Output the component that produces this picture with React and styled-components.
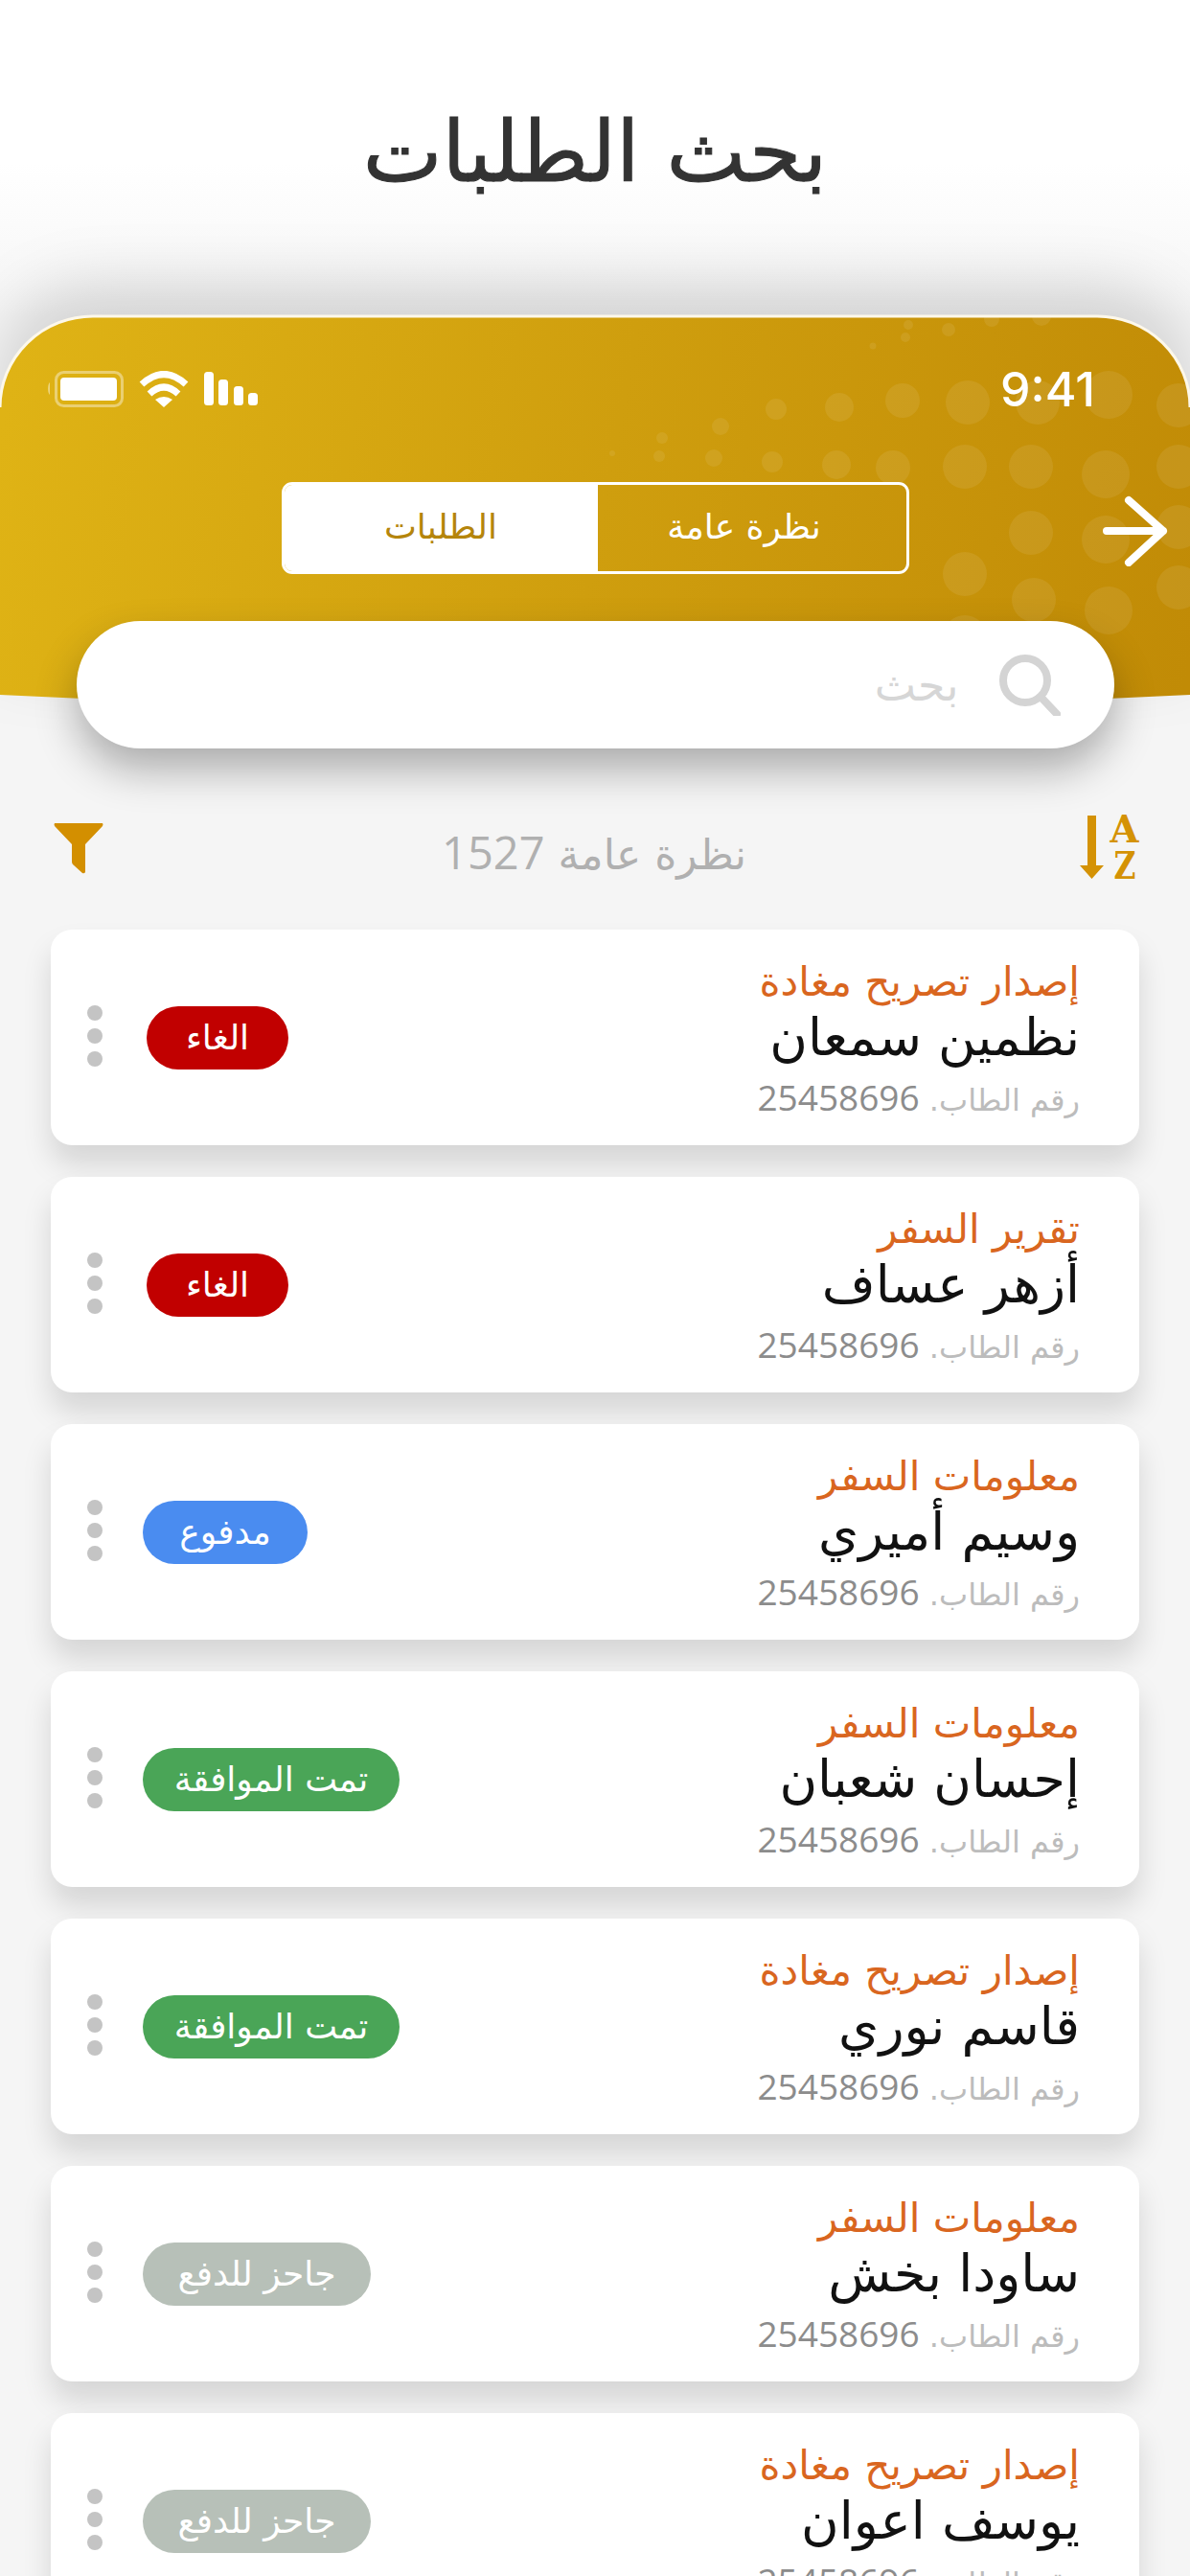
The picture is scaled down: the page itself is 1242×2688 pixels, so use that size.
import React from "react";
import styled, { createGlobalStyle } from "styled-components";

const GlobalStyle = createGlobalStyle`
  html, body { margin: 0; padding: 0; }
  body {
    width: 1242px;
    height: 2688px;
    overflow: hidden;
    font-family: "DejaVu Sans", sans-serif;
    background: linear-gradient(180deg, #ffffff 0, #ffffff 170px, #f5f5f5 330px, #f5f5f5 100%);
  }
`;

const Page = styled.div`
  width: 1242px;
  height: 2688px;
  overflow: hidden;
  direction: rtl;
`;

const TitleBar = styled.header`
  height: 330px;
  display: flex;
  justify-content: center;
  align-items: flex-start;
`;

const Title = styled.h1`
  margin: 104px 0 0;
  font-size: 88px;
  line-height: 110px;
  font-weight: 400;
  color: #333333;
  -webkit-text-stroke: 1px #333333;
`;

const Hero = styled.section`
  position: relative;
  height: 451px;
  padding-top: 56px;
  box-sizing: border-box;
  display: flex;
  flex-direction: column;
`;

const Backdrop = styled.svg`
  position: absolute;
  left: 0;
  top: 0;
  width: 1242px;
  height: 440px;
  overflow: visible;
  filter: drop-shadow(0 -30px 32px rgba(0, 0, 0, 0.14));
`;

const StatusBar = styled.div`
  position: relative;
  direction: ltr;
  height: 40px;
  padding: 0 99px 0 49px;
  display: flex;
  justify-content: space-between;
  align-items: center;
`;

const StatusIcons = styled.div`
  display: flex;
  align-items: center;
  gap: 16px;
`;

const Clock = styled.span`
  font-family: Inter, sans-serif;
  font-weight: 500;
  font-size: 50px;
  line-height: 40px;
  color: #ffffff;
`;

const Toggle = styled.div`
  position: relative;
  width: 655px;
  height: 96px;
  margin: 77px auto 0;
  box-sizing: border-box;
  border: 3px solid #ffffff;
  border-radius: 11px;
  display: flex;
  overflow: hidden;
`;

const ToggleTab = styled.div`
  flex: 0 0 ${(p) => (p.$active ? "322px" : "327px")};
  display: flex;
  align-items: center;
  justify-content: center;
  font-size: 36px;
  padding: 0 ${(p) => (p.$active ? "16px" : "0")} 4px 0;
  box-sizing: border-box;
  color: ${(p) => (p.$active ? "#ffffff" : "#b5850b")};
  background: ${(p) => (p.$active ? "transparent" : "#ffffff")};
`;

const BackArrow = styled.svg`
  position: absolute;
  left: 1150px;
  top: 187px;
  width: 70px;
  height: 74px;
`;

const SearchBar = styled.div`
  position: relative;
  width: 1083px;
  height: 133px;
  margin: 49px auto 0;
  border-radius: 67px;
  background: #ffffff;
  box-shadow: 0 22px 44px rgba(0, 0, 0, 0.3);
  box-sizing: border-box;
  padding-right: 56px;
  display: flex;
  align-items: center;
  gap: 42px;
`;

const SearchHint = styled.span`
  font-size: 46px;
  color: #d6d6d6;
`;

const SortRow = styled.div`
  direction: ltr;
  margin-top: 69px;
  height: 67px;
  padding: 0 54px 0 56px;
  display: flex;
  justify-content: space-between;
  align-items: center;
`;

const FilterWrap = styled.div`
  display: flex;
  margin-top: 4px;
`;

const CountLabel = styled.div`
  direction: rtl;
  font-size: 44px;
  color: #b0b0b0;
  line-height: 58px;
  margin: 14px 0 0 6px;
`;

const CountDigits = styled.span`
  font-family: "Open Sans", sans-serif;
  font-size: 47px;
`;

const CardList = styled.div`
  margin-top: 53px;
  padding: 0 53px;
  display: flex;
  flex-direction: column;
  gap: 33px;
`;

const Card = styled.article`
  flex: 0 0 225px;
  height: 225px;
  box-sizing: border-box;
  background: #ffffff;
  border-radius: 22px;
  box-shadow: 0 20px 30px rgba(0, 0, 0, 0.13);
  padding: 0 62px 0 38px;
  display: flex;
  justify-content: space-between;
  align-items: center;
`;

const CardText = styled.div`
  padding-top: 12px;
  display: flex;
  flex-direction: column;
  align-items: flex-start;
`;

const RequestType = styled.div`
  font-size: 42px;
  line-height: 52px;
  color: #d9661f;
`;

const Applicant = styled.div`
  font-size: 54px;
  line-height: 64px;
  color: #111111;
`;

const RequestNo = styled.div`
  font-size: 32px;
  line-height: 60px;
  color: #bcbcbc;
`;

const RequestDigits = styled.span`
  font-family: "Open Sans", sans-serif;
  font-size: 37px;
  color: #8c8c8c;
`;

const CardActions = styled.div`
  display: flex;
  align-items: center;
  gap: ${(p) => p.$gap}px;
`;

const StatusBadge = styled.div`
  width: ${(p) => p.$width}px;
  height: 66px;
  border-radius: 33px;
  background: ${(p) => p.$color};
  color: #ffffff;
  font-size: 36px;
  display: flex;
  align-items: center;
  justify-content: center;
`;

const Kebab = styled.div`
  display: flex;
  flex-direction: column;
  gap: 8px;
  margin-top: -3px;
`;

const KebabDot = styled.span`
  width: 16px;
  height: 16px;
  border-radius: 50%;
  background: #c4c4c4;
`;

const SortSvg = styled.svg`
  overflow: visible;
`;

const dots = [
  [1157, 412, 25], [1083, 420, 23], [1010, 420, 23], [942, 418, 18], [876, 425, 15], [810, 427, 11], [1230, 423, 23],
  [1230, 487, 23], [1154, 495, 25], [1076, 487, 23], [1007, 487, 23], [932, 488, 18], [873, 485, 15], [806, 482, 11],
  [745, 478, 9], [688, 476, 6], [639, 473, 3], [752, 445, 9], [691, 457, 6],
  [1076, 556, 23], [1154, 563, 25], [1230, 550, 23], [1007, 599, 23], [1079, 626, 23], [1157, 637, 25], [1230, 613, 23],
  [990, 344, 7], [948, 339, 5], [945, 352, 5], [911, 361, 3.5], [1035, 333, 8], [1087, 330, 10], [1007, 665, 23], [1079, 690, 23],
];

const shape =
  "M0 95 A97 95 0 0 1 97 0 L1145 0 A97 95 0 0 1 1242 95 L1242 395 Q621 426 0 395 Z";

const HeroBackdrop = () => (
  <Backdrop viewBox="0 0 1242 440" aria-hidden="true">
    <defs>
      <linearGradient id="gold" gradientUnits="userSpaceOnUse" x1="0" y1="120" x2="1242" y2="360">
        <stop offset="0" stopColor="#dfb315" />
        <stop offset="0.5" stopColor="#cf9e0e" />
        <stop offset="1" stopColor="#c18b06" />
      </linearGradient>
      <clipPath id="goldClip">
        <path d={shape} />
      </clipPath>
    </defs>
    <path d={shape} fill="url(#gold)" />
    <g clipPath="url(#goldClip)" fill="#ffffff" fillOpacity="0.08">
      {dots.map(([x, y, r]) => (
        <circle key={`${x}-${y}`} cx={x} cy={y - 330} r={r} />
      ))}
    </g>
    <path d="M0 95 A97 95 0 0 1 97 0 L1145 0 A97 95 0 0 1 1242 95" fill="none" stroke="#fdf8ea" strokeWidth="3" />
  </Backdrop>
);

const Battery = () => (
  <svg width="80" height="38" viewBox="0 0 80 38">
    <path d="M3 12 A3 7 0 0 0 3 25 Z" fill="#ffffff" fillOpacity="0.45" />
    <rect x="9.5" y="1.5" width="69" height="35" rx="8" fill="none" stroke="#ffffff" strokeOpacity="0.4" strokeWidth="3" />
    <rect x="14" y="7" width="59" height="24" rx="4" fill="#ffffff" />
  </svg>
);

const Wifi = () => (
  <svg width="52" height="38" viewBox="0 0 52 38">
    <path d="M3 14 Q26 -7 49 14" fill="none" stroke="#ffffff" strokeWidth="7" />
    <path d="M11 24 Q26 10 41 24" fill="none" stroke="#ffffff" strokeWidth="7" />
    <path d="M17 30 Q26 24 35 30 L26 38 Z" fill="#ffffff" />
  </svg>
);

const Signal = () => (
  <svg width="56" height="36" viewBox="0 0 56 36" fill="#ffffff">
    <rect x="0" y="0" width="10" height="35" rx="3.5" />
    <rect x="15" y="8" width="10" height="27" rx="3.5" />
    <rect x="31" y="15" width="10" height="20" rx="3.5" />
    <rect x="46" y="22" width="10" height="13" rx="3.5" />
  </svg>
);

const SearchGlyph = () => (
  <svg width="64" height="64" viewBox="0 0 64 64" fill="none" stroke="#d4d4d4" strokeWidth="8">
    <circle cx="27" cy="27" r="23" />
    <path d="M43 44 L60 62" strokeLinecap="round" />
  </svg>
);

const FilterGlyph = () => (
  <svg width="52" height="53" viewBox="0 0 52 53">
    <path
      d="M1 0 H51 Q52 1 51 3 L33 22 V51 Q32 53 30 52 L20 43 Q19 42 19 40 V22 L1 3 Q0 1 1 0 Z"
      fill="#d38f00"
    />
  </svg>
);

const SortGlyph = () => (
  <SortSvg width="62" height="68" viewBox="0 0 62 68">
    <path d="M9 1 H18 V53 H26 L13.5 67 L1 53 H9 Z" fill="#d49205" />
    <text x="47.5" y="29" textAnchor="middle" textLength="30" lengthAdjust="spacingAndGlyphs" fontFamily="'DejaVu Serif', serif" fontWeight="700" fontSize="40" fill="#d49205">A</text>
    <text x="48" y="67" textAnchor="middle" textLength="23" lengthAdjust="spacingAndGlyphs" fontFamily="'DejaVu Serif', serif" fontWeight="700" fontSize="40" fill="#d49205">Z</text>
  </SortSvg>
);

const badges = {
  cancel: { label: "الغاء", color: "#c10000", width: 148, gap: 46 },
  paid: { label: "مدفوع", color: "#4a8cf0", width: 172, gap: 42 },
  approved: { label: "تمت الموافقة", color: "#4aa557", width: 268, gap: 42 },
  ready: { label: "جاحز للدفع", color: "#b7c0b8", width: 238, gap: 42 },
};

const requests = [
  { type: "إصدار تصريح مغادة", name: "نظمين سمعان", status: "cancel" },
  { type: "تقرير السفر", name: "أزهر عساف", status: "cancel" },
  { type: "معلومات السفر", name: "وسيم أميري", status: "paid" },
  { type: "معلومات السفر", name: "إحسان شعبان", status: "approved" },
  { type: "إصدار تصريح مغادة", name: "قاسم نوري", status: "approved" },
  { type: "معلومات السفر", name: "ساودا بخش", status: "ready" },
  { type: "إصدار تصريح مغادة", name: "يوسف اعوان", status: "ready" },
];

export default function App() {
  return (
    <Page>
      <GlobalStyle />
      <TitleBar>
        <Title>بحث الطلبات</Title>
      </TitleBar>
      <Hero>
        <HeroBackdrop />
        <StatusBar>
          <StatusIcons>
            <Battery />
            <Wifi />
            <Signal />
          </StatusIcons>
          <Clock>9:41</Clock>
        </StatusBar>
        <Toggle>
          <ToggleTab $active>نظرة عامة</ToggleTab>
          <ToggleTab>الطلبات</ToggleTab>
        </Toggle>
        <BackArrow viewBox="0 0 70 74" fill="none" stroke="#ffffff" strokeWidth="8" strokeLinecap="round" strokeLinejoin="round">
          <path d="M5 37 H64 M28 5 L64 37 L28 70" />
        </BackArrow>
        <SearchBar>
          <SearchGlyph />
          <SearchHint>بحث</SearchHint>
        </SearchBar>
      </Hero>
      <SortRow>
        <FilterWrap>
          <FilterGlyph />
        </FilterWrap>
        <CountLabel>
          نظرة عامة <CountDigits>1527</CountDigits>
        </CountLabel>
        <SortGlyph />
      </SortRow>
      <CardList>
        {requests.map((r) => {
          const badge = badges[r.status];
          return (
            <Card key={r.name}>
              <CardText>
                <RequestType>{r.type}</RequestType>
                <Applicant>{r.name}</Applicant>
                <RequestNo>
                  رقم الطاب. <RequestDigits>25458696</RequestDigits>
                </RequestNo>
              </CardText>
              <CardActions $gap={badge.gap}>
                <StatusBadge $width={badge.width} $color={badge.color}>{badge.label}</StatusBadge>
                <Kebab>
                  <KebabDot />
                  <KebabDot />
                  <KebabDot />
                </Kebab>
              </CardActions>
            </Card>
          );
        })}
      </CardList>
    </Page>
  );
}
